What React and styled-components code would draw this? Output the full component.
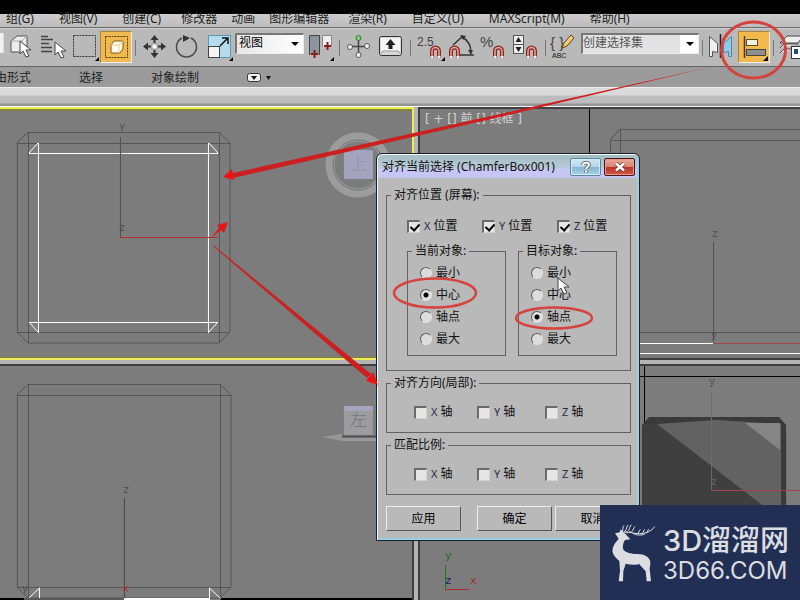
import React from 'react';
import styled, { createGlobalStyle } from 'styled-components';

const GlobalStyle = createGlobalStyle`
  * {
    box-sizing: border-box;
  }

  body {
    margin: 0;
    font-family: "Noto Sans", "Noto Sans CJK SC", sans-serif;
    font-size: 12px;
    line-height: 16px;
    color: #111;
  }
`;

const Screen = styled.div`
  position: relative;
  display: flex;
  flex-direction: column;
  height: 100vh;
  overflow: hidden;
  background: #b9b9b9;
`;

const TopBand = styled.div`
  flex: none;
  height: 14px;
  background: #000;
`;

const MenuBar = styled.nav`
  flex: none;
  display: flex;
  height: 13px;
  line-height: 10px;
  background: linear-gradient(#cbcbcb, #bdbdbd);
`;

const MenuItem = styled.a`
  flex: none;
  padding: ${p => (p.$hotkey ? '0 13px 0 12px' : '0 7px')};
  color: #222;
  text-decoration: none;
  white-space: nowrap;

  &:first-child {
    padding-left: 6px;
  }
`;

const Toolbar = styled.div`
  flex: none;
  display: flex;
  height: 40px;
  padding-top: 3px;
  overflow: hidden;
  border-top: 1px solid #6c6c6c;
  border-bottom: 1px solid #626262;
  background: #b9b9b9;
  box-shadow: inset 0 1px #cfcfcf;
`;

const IconButton = styled.button`
  flex: none;
  width: 32px;
  height: 32px;
  padding: 0;
  border: 1px solid ${p => (p.$active ? '#a58440' : 'transparent')};
  border-right-color: ${p => (p.$active ? '#eee' : 'transparent')};
  border-bottom-color: ${p => (p.$active ? '#eee' : 'transparent')};
  background: ${p => (p.$active ? '#f2b94e' : 'none')};

  svg {
    display: block;
    margin: -1px;
  }
`;

const Separator = styled.span`
  flex: none;
  width: 7px;
  height: 16px;
  margin-top: 9px;
  background: linear-gradient(#777, #777) 3px 0 / 1px 100% no-repeat;
`;

const FieldEnd = styled.span`
  flex: none;
  width: 4px;
  height: 20px;
  margin-top: 2px;
  background: #f1f1f1;
  border-right: 1px solid #ddd;
`;

const SelectBox = styled.span`
  flex: none;
  position: relative;
  width: ${p => p.$width}px;
  height: 21px;
  margin-top: 2px;

  &::after {
    content: '';
    position: absolute;
    top: 9px;
    right: 5px;
    border: 4px solid transparent;
    border-top-color: #000;
    border-bottom: 0;
    pointer-events: none;
  }
`;

const Select = styled.select`
  appearance: none;
  display: block;
  width: 100%;
  height: 100%;
  padding: 0 0 2px ${p => (p.$muted ? 0 : 2)}px;
  border: 1px solid #777;
  border-width: 2px 1px 1px 2px;
  border-right-color: #eee;
  border-bottom-color: #eee;
  border-radius: 0;
  background: ${p => (p.$muted ? 'linear-gradient(90deg, #e2e2e2 97px, #fff 97px)' : 'linear-gradient(90deg, #e8e8e8, #fff)')};
  color: ${p => (p.$muted ? '#555' : '#000')};
  font: inherit;
`;

const Ribbon = styled.div`
  flex: none;
  display: flex;
  align-items: center;
  gap: 48px;
  height: 20px;
  padding-top: 2px;
  background: #9b9b9b;
`;

const RibbonTab = styled.span`
  display: flex;
  justify-content: flex-end;
  white-space: nowrap;
  color: #222;

  &:first-child {
    width: 31px;
    overflow: hidden;
  }
`;

const RibbonToggle = styled.button`
  display: flex;
  padding: 0;
  border: 0;
  background: none;
`;

const RibbonEdge = styled.div`
  flex: none;
  height: 20px;
  border-top: 1px solid #eee;
  border-bottom: 1px solid #f4f4f4;
  background: linear-gradient(#dadada 7px, #bcbcbc 8px, #bcbcbc 15px, #959595 16px);
`;

const Viewports = styled.main`
  flex: 1;
  min-height: 0;
  display: grid;
  grid-template-columns: 52fr 48fr;
  grid-template-rows: 253fr 236fr;
  gap: 4px;
  background: #b4b4b4;
`;

const Viewport = styled.section`
  min-width: 0;
  min-height: 0;
  overflow: hidden;
  border: 2px solid ${p => (p.$active ? '#ecec5c' : '#3f3f3f')};
  border-left-width: ${p => (p.$flush ? 0 : 2)}px;
  border-right-width: ${p => (p.$flush ? 2 : 0)}px;
  border-bottom-width: ${p => (p.$last ? 0 : 2)}px;
  background: #7c7c7c;
  box-shadow: ${p => (p.$active ? 'inset 0 2px #85823c, inset 0 -1px #85823c' : 'none')};

  svg {
    display: block;
    width: 100%;
    height: 100%;
  }
`;

const Annotations = styled.svg`
  position: absolute;
  inset: 0;
  width: 100%;
  height: 100%;
  pointer-events: none;
`;

const Dialog = styled.div`
  position: absolute;
  left: 376px;
  top: 153px;
  width: 264px;
  border: 1px solid #17222b;
  border-radius: 6px 6px 0 0;
  background: #b9b9b9;
  box-shadow: inset 1px 1px #f2f7f9, inset -2px -2px #9bd0e6;
`;

const TitleBar = styled.header`
  display: flex;
  align-items: center;
  gap: 3px;
  height: 23px;
  margin: 1px 2px 0 1px;
  padding: 0 2px 0 4px;
  border-radius: 5px 5px 0 0;
  background: linear-gradient(#a3bfc0, #b9c9d8 55%, #c9c9fa 65%, #c4c4ef);
`;

const Title = styled.h1`
  flex: 1;
  margin: 0;
  font-size: 12px;
  font-weight: 400;
  color: #111;
  white-space: nowrap;
`;

const TitleButton = styled.button`
  display: flex;
  align-items: center;
  justify-content: center;
  width: 31px;
  height: 18px;
  padding: 0;
  border: 1px solid ${p => (p.$danger ? '#4a1418' : '#5c86a6')};
  border-radius: 2px;
  background: ${p => (p.$danger
    ? 'linear-gradient(#e8aa9c, #d98472 48%, #b93325 50%, #cf5945)'
    : 'linear-gradient(#cfe6f2, #b5d6ea 48%, #84b3cf 50%, #a9d3e6)')};
  box-shadow: inset 0 0 0 1px ${p => (p.$danger ? '#e59a8b' : '#d6ecf5')};
`;

const DialogBody = styled.form`
  display: flex;
  flex-direction: column;
  gap: 4px;
  padding: 9px 8px 9px 9px;
`;

const Group = styled.fieldset`
  min-width: 0;
  margin: 0;
  padding: 0;
  border: 1px solid #626262;
`;

const Legend = styled.legend`
  height: 16px;
  margin-left: 4px;
  padding: 0 3px;
`;

const GroupBody = styled.div`
  padding: ${p => p.$pad};
`;

const CheckRow = styled.div`
  display: grid;
  grid-template-columns: ${p => p.$columns};
`;

const Choice = styled.label`
  display: flex;
  align-items: center;
  gap: 4px;
  height: 14px;
  line-height: 18px;
  white-space: nowrap;
`;

const Axis = styled.span`
  margin-right: 3px;
  font-size: 11px;
  color: #2b2b4c;
`;

const Checkbox = styled.input`
  appearance: none;
  width: 13px;
  height: 13px;
  margin: 0;
  border: 2px solid #6a6a6a;
  border-right: 1px solid #d2d2d2;
  border-bottom: 1px solid #d2d2d2;
  background: #e6e6e6;

  &:checked::before {
    content: '';
    display: block;
    width: 4px;
    height: 7px;
    margin: 0 0 0 3px;
    border: solid #000;
    border-width: 0 2px 2px 0;
    transform: rotate(42deg);
  }
`;

const RadioList = styled.div`
  display: flex;
  flex-direction: column;
  gap: 8px;
`;

const Radio = styled.input`
  appearance: none;
  width: 12px;
  height: 12px;
  margin: 0;
  border: 1px solid;
  border-color: #5c5c5c #e2e2e2 #e2e2e2 #5c5c5c;
  border-radius: 50%;
  background: ${p => (p.defaultChecked ? 'radial-gradient(#000 2px, #e0e0e0 3px)' : '#dcdcdc')};
`;

const PairRow = styled.div`
  display: grid;
  grid-template-columns: 1fr 1fr;
  gap: 12px;
  margin-top: 10px;
`;

const ButtonRow = styled.div`
  display: grid;
  grid-template-columns: 75px 75px 75px;
  column-gap: 3px;
  justify-content: end;
  margin: 7px 1px 0 0;

  button:first-child {
    margin: 0 13px 0 -13px;
  }
`;

const PushButton = styled.button`
  height: 25px;
  padding: 0;
  border: 1px solid;
  border-color: #ececec #585858 #585858 #ececec;
  background: #b9b9b9;
  color: #000;
  font: inherit;
`;

const Watermark = styled.aside`
  position: absolute;
  right: 0;
  bottom: 0;
  display: flex;
  align-items: center;
  gap: 6px;
  width: 200px;
  height: 95px;
  padding-left: 10px;
  background: #212f54;
  color: #dcdde0;
`;

const BrandText = styled.div`
  font-family: "Inter", "Noto Sans CJK SC", sans-serif;
  white-space: nowrap;
`;

const BrandName = styled.div`
  font-size: 29px;
  font-weight: 500;
  line-height: 36px;
`;

const BrandSite = styled.div`
  font-size: 24px;
  line-height: 24px;
`;

const menus = [
  { label: '组(G)', hotkey: true },
  { label: '视图(V)', hotkey: true },
  { label: '创建(C)', hotkey: true },
  { label: '修改器' },
  { label: '动画' },
  { label: '图形编辑器' },
  { label: '渲染(R)', hotkey: true },
  { label: '自定义(U)', hotkey: true },
  { label: 'MAXScript(M)', hotkey: true },
  { label: '帮助(H)', hotkey: true },
];

const Cursor = ({ x, y }) => (
  <path
    transform={`translate(${x} ${y})`}
    d="M0 0v13l3-3 3 6 3-1-3-6h5z"
    fill="#fff"
    stroke="#444"
    strokeWidth="1"
  />
);

const Magnet = ({ x, y }) => (
  <g transform={`translate(${x} ${y})`} fill="none">
    <path d="M2 12V5a3.500 3.500 0 0 1 7 0v7" stroke="#8c2420" strokeWidth="4" />
    <path d="M2 11V5a3.500 3.500 0 0 1 7 0v6" stroke="#e8a79c" strokeWidth="1.500" />
    <path d="M0.500 11h3M7.500 11h3" stroke="#f5f5f5" strokeWidth="2" />
  </g>
);

const Corner = ({ x = 28, y = 29 }) => <path d={`M${x} ${y}v-4l-4 4z`} fill="#000" />;

const icons = {
  select: (
    <>
      <path d="M7 10l6-5h10v11l-5 5H7z" fill="#eee" stroke="#555" />
      <path d="M7 10h11v11M18 10l5-5" fill="none" stroke="#aaa" />
      <Cursor x={16} y={10} />
    </>
  ),
  list: (
    <>
      <path d="M5 5.500h7M5 8.500h12M5 12.500h8M5 16.500h11M5 20.500h11" stroke="#444" strokeWidth="1.500" />
      <Cursor x={19} y={11} />
    </>
  ),
  region: (
    <>
      <rect x="5.500" y="4.500" width="22" height="21" fill="none" stroke="#333" strokeDasharray="2 1" />
      <path d="M31 30v-4l-4 4z" fill="#000" />
    </>
  ),
  windowMode: (
    <>
      <rect x="5.500" y="5.500" width="22" height="21" fill="none" stroke="#4c3a10" strokeDasharray="2 1" />
      <path d="M11 14l3-4h9v8l-3 4h-9z" fill="#fffbe8" stroke="#7d5c18" />
      <path d="M11 14h8v8M19 14l4-4" fill="none" stroke="#e8cf95" />
    </>
  ),
  move: (
    <>
      <path d="M15.500 4l4 5h-3v3h-2V9h-3zM15.500 27l4-5h-3v-3h-2v3h-3zM4 15.500l5-4v3h3v2H9v3zM27 15.500l-5-4v3h-3v2h3v3z" fill="#333" />
      <rect x="13" y="13" width="5" height="5" fill="#fff" stroke="#999" />
    </>
  ),
  rotate: (
    <>
      <path d="M11 7a10 10 0 1 0 9 0" fill="none" stroke="#4a4a4a" strokeWidth="1.500" />
      <path d="M12 4l7 3-7 4z" fill="#333" />
    </>
  ),
  scale: (
    <>
      <rect x="5.500" y="4.500" width="22" height="22" fill="#b4dcec" stroke="#5a9ab5" />
      <rect x="5.500" y="15.500" width="11" height="11" fill="#f4f4f4" stroke="#444" />
      <path d="M17 15l7-7M19 7h6v6" fill="none" stroke="#111" strokeWidth="1.500" />
      <path d="M30 30v-4l-4 4z" fill="#000" />
    </>
  ),
  pivot: (
    <>
      <path d="M5.500 24V4.500h10V24" fill="#8d969e" stroke="#444" />
      <path d="M18.500 16V4.500h9v11" fill="#eee" stroke="#888" />
      <path d="M7 23h7M10.500 19v8M20 15h7M23.500 11v8" stroke="#8a1c1c" strokeWidth="2" />
      <Corner x={30} y={30} />
    </>
  ),
  manipulate: (
    <>
      <path d="M15.500 8v16M7 15.500h18" stroke="#444" strokeWidth="1.500" />
      <circle cx="15.500" cy="7" r="2.500" fill="#7fd07a" stroke="#2d7a2d" />
      <circle cx="7" cy="16" r="2.500" fill="#f4f4f4" stroke="#555" />
      <circle cx="24" cy="15" r="2.500" fill="#f4f4f4" stroke="#555" />
      <circle cx="15.500" cy="24" r="2.500" fill="#f4f4f4" stroke="#555" />
    </>
  ),
  keyboard: (
    <>
      <rect x="4.500" y="5.500" width="22" height="19" rx="2" fill="#d8d8d8" stroke="#333" />
      <rect x="6" y="7" width="19" height="13" fill="#f6f6f6" />
      <path d="M15.500 8l5 6h-3v4h-4v-4h-3z" fill="#222" />
      <path d="M5 24l3-4h15l3 4" fill="none" stroke="#999" />
    </>
  ),
  snap: (
    <>
      <text x="3" y="15" fontSize="12" fill="#444">2.5</text>
      <Magnet x={16} y={15} />
      <Corner x={31} y={30} />
    </>
  ),
  angle: (
    <>
      <path d="M7 14L17 5M14 24h14M16 6c6 3 9 9 9 16" fill="none" stroke="#333" strokeWidth="1.500" />
      <path d="M14 4l6 1-3 4zM22 19h5l-2 5z" fill="#333" />
      <Magnet x={3} y={15} />
    </>
  ),
  percent: (
    <>
      <text x="2" y="16" fontSize="15" fill="#444">%</text>
      <Magnet x={15} y={15} />
    </>
  ),
  spinner: (
    <>
      <rect x="3.500" y="4.500" width="10" height="18" fill="#eee" stroke="#555" />
      <path d="M3 13.500h11" stroke="#555" />
      <path d="M8.500 6l3 5h-6zM8.500 21l3-5h-6z" fill="#222" />
      <Magnet x={16} y={15} />
    </>
  ),
  edit: (
    <>
      <text x="1" y="17" fontSize="15" fill="#444">{'{ }'}</text>
      <path d="M13 17l2-5 7-8 3 3-7 8z" fill="#f1cc76" stroke="#5d4412" />
      <text x="3" y="27" fontSize="7" fill="#111">ABC</text>
    </>
  ),
  mirror: (
    <>
      <path d="M3.500 25.500V5.500l8 7v9l-5-1v5z" fill="#f0f0f0" stroke="#555" />
      <path d="M25.500 25.500V5.500l-8 7v9l5-1v5z" fill="#8ecbe6" stroke="#4e8aa8" />
      <path d="M14.500 3v24" stroke="#222" strokeWidth="1.500" />
    </>
  ),
  align: (
    <>
      <path d="M6.500 5v22" stroke="#4a3a12" strokeWidth="1.500" />
      <rect x="8.500" y="8.500" width="11" height="6" fill="#f4efdc" stroke="#5d4c20" />
      <rect x="8.500" y="18.500" width="19" height="6" fill="#8e8e8e" stroke="#4c4636" />
      <path d="M30 30v-5l-5 5z" fill="#000" />
    </>
  ),
  layers: (
    <>
      <path d="M3 12l7-7h16l-5 7zM3 17l4-4h14M3 22l4-4h10" fill="#eee" stroke="#444" />
      <rect x="14.500" y="15.500" width="14" height="12" fill="#fff" stroke="#333" />
      <path d="M17 18h4v5h-4z" fill="#234a7a" />
    </>
  ),
};

const Tool = ({ name, label, active }) => (
  <IconButton type="button" aria-label={label} $active={active}>
    <svg width="32" height="32" viewBox="0 0 32 32">{icons[name]}</svg>
  </IconButton>
);

// a chamfered box seen flat: inner lines, outer lines and the four cut corners
const BoxWire = ({ x, y, w, h }) => (
  <path
    transform={`translate(${x} ${y})`}
    d={`M11 0.500H${w - 11}M0 11.500H${w}M0 ${h - 10.5}H${w}M11 ${h}H${w - 11}
      M0.500 11V${h - 11}M11.500 0V${h}M${w - 10.5} 0V${h}M${w} 11V${h - 11}
      M0 11L11 0M${w} 11L${w - 11} 0M0 ${h - 11}L11 ${h}M${w} ${h - 11}L${w - 11} ${h}`}
    fill="none"
    stroke="#565656"
  />
);

const AxisName = ({ x, y, color = '#4c4c4c', size = 10, children }) => (
  <text x={x} y={y} fontSize={size} fill={color} fontFamily="Liberation Mono, monospace">{children}</text>
);

const TopView = () => (
  <svg viewBox="0 109 412 249" preserveAspectRatio="xMidYMid slice">
    <BoxWire x={17} y={132} w={213} h={211} />
    <path
      d="M29 153.500H218M29 322.500H218M38.500 143V333M208.500 143V333M29 153l9-10M218 153l-9-10M29 322l9 10M218 322l-9 10"
      fill="none"
      stroke="#fff"
    />
    <path d="M120.500 137V237" stroke="#505050" />
    <path d="M120 237.500H218" stroke="#b52a2a" />
    <AxisName x={119} y={131}>Y</AxisName>
    <AxisName x={119} y={231}>z</AxisName>
    <circle cx="358" cy="165" r="28" fill="none" stroke="#9c9c9c" strokeWidth="9" />
    <circle cx="358" cy="165" r="25" fill="none" stroke="#6f7676" />
    <rect x="344" y="150" width="29" height="29" fill="#a3a3c0" />
    <text x="350" y="170" fontSize="17" fontWeight="300" fill="#92929c">上</text>
  </svg>
);

const FrontView = () => (
  <svg viewBox="420 109 380 249" preserveAspectRatio="xMidYMid slice">
    <text x="425" y="123" fontSize="12" fontFamily="DejaVu Sans, Noto Sans CJK SC, sans-serif" fill="#d4d4d4">[ + [] 前 [] 线框 ]</text>
    <path d="M589.500 109V160" stroke="#000" />
    <path d="M620 129.500H800M610 140.500H800M610.500 140V332M620.500 129V343M610 140l10-11M610 332.500H800" fill="none" stroke="#565656" />
    <path d="M713.500 242V342" stroke="#505050" />
    <path d="M610 343.500H713M610 353.500H800" stroke="#fff" />
    <path d="M713 343.500H800" stroke="#a84444" />
    <AxisName x={712} y={237}>z</AxisName>
    <AxisName x={711} y={338}>y</AxisName>
  </svg>
);

const LeftView = () => (
  <svg viewBox="0 366 412 234" preserveAspectRatio="xMidYMid slice">
    <BoxWire x={17} y={384} w={214} h={214} />
    <path d="M124.500 498V598" stroke="#484848" />
    <AxisName x={123} y={493}>z</AxisName>
    <AxisName x={123} y={592} color="#b83030">x</AxisName>
    <AxisName x={22} y={592}>y</AxisName>
    <path d="M0 599H24M221 599H412" stroke="#000" strokeWidth="2" />
    <path d="M24 599H124" stroke="#5a5a5a" strokeWidth="2" />
    <path d="M124 599H210" stroke="#fff" strokeWidth="2" />
    <path d="M29 598l10.500-10v10M220 598l-10.500-10v10" fill="none" stroke="#fff" />
    <path d="M322 437l20-3v4H412v3H342z" fill="#989898" />
    <path d="M342 436.500H412" stroke="#555" strokeWidth="2" />
    <rect x="344" y="406" width="29" height="29" fill="#9c9c9e" />
    <rect x="344" y="406" width="29" height="5" fill="#a4a4bd" />
    <text x="350" y="426" fontSize="17" fontWeight="300" fill="#747476">左</text>
  </svg>
);

const PerspectiveView = () => (
  <svg viewBox="420 366 380 234" preserveAspectRatio="xMidYMid slice">
    <path d="M600 376.500H800M644.500 366V425" stroke="#000" />
    <path d="M642 600V425l7-8H779l7 8V600z" fill="#3a3a3a" />
    <path d="M657 424l60-4 64 4v176H657z" fill="#626262" />
    <path d="M644 424h13l105 81v95H644z" fill="#3f3f3f" />
    <path d="M745 423h35v27z" fill="#858585" />
    <path d="M711.500 392V490" stroke="#6c6c6c" />
    <path d="M711 490.500H800" stroke="#9d4550" />
    <AxisName x={709} y={385}>y</AxisName>
    <AxisName x={711} y={485} color="#666">z</AxisName>
    <path d="M445.500 565V589" stroke="#1d7a1d" />
    <path d="M445 589.500H469" stroke="#b02828" />
    <AxisName x={445} y={559} color="#1d6b1d" size={11}>y</AxisName>
    <AxisName x={445} y={584} color="#10206b" size={11}>z</AxisName>
    <AxisName x={470} y={584} color="#a02c2c" size={11}>x</AxisName>
  </svg>
);

const Check = ({ axis, text, checked }) => (
  <Choice>
    <Checkbox type="checkbox" defaultChecked={checked} />
    <span><Axis>{axis}</Axis>{text}</span>
  </Choice>
);

const Anchors = ({ name, title, value }) => (
  <Group>
    <Legend>{title}</Legend>
    <GroupBody $pad="7px 0 9px 12px">
      <RadioList>
        {['最小', '中心', '轴点', '最大'].map(option => (
          <Choice key={option}>
            <Radio type="radio" name={name} defaultChecked={option === value} />
            {option}
          </Choice>
        ))}
      </RadioList>
    </GroupBody>
  </Group>
);

const AxisGroup = ({ title }) => (
  <Group>
    <Legend>{title}</Legend>
    <GroupBody $pad="14px 0 13px 27px">
      <CheckRow $columns="63px 68px auto">
        {['X', 'Y', 'Z'].map(axis => <Check key={axis} axis={axis} text="轴" />)}
      </CheckRow>
    </GroupBody>
  </Group>
);

const AlignDialog = () => (
  <Dialog role="dialog" aria-labelledby="align-title">
    <TitleBar>
      <Title id="align-title">对齐当前选择 (ChamferBox001)</Title>
      <TitleButton type="button" aria-label="帮助">
        <svg width="10" height="12" viewBox="0 0 10 12" fill="none">
          <path d="M2 4c0-3 6-3 6 0 0 2-3 2-3 4M5 9.500v2" stroke="#555" strokeWidth="3.500" />
          <path d="M2 4c0-3 6-3 6 0 0 2-3 2-3 4M5 9.500v2" stroke="#fff" strokeWidth="2" />
        </svg>
      </TitleButton>
      <TitleButton type="button" aria-label="关闭" $danger>
        <svg width="12" height="10" viewBox="0 0 12 10">
          <path d="M2 1.500l8 7M10 1.500l-8 7" stroke="#66302c" strokeWidth="4" />
          <path d="M2 1.500l8 7M10 1.500l-8 7" stroke="#fff" strokeWidth="2.500" />
        </svg>
      </TitleButton>
    </TitleBar>
    <DialogBody>
      <Group>
        <Legend>对齐位置 (屏幕):</Legend>
        <GroupBody $pad="16px 13px 14px 20px">
          <CheckRow $columns="75px 75px auto">
            {['X', 'Y', 'Z'].map(axis => <Check key={axis} axis={axis} text="位置" checked />)}
          </CheckRow>
          <PairRow>
            <Anchors name="current" title="当前对象:" value="中心" />
            <Anchors name="target" title="目标对象:" value="轴点" />
          </PairRow>
        </GroupBody>
      </Group>
      <AxisGroup title="对齐方向(局部):" />
      <AxisGroup title="匹配比例:" />
      <ButtonRow>
        <PushButton type="button">应用</PushButton>
        <PushButton type="button">确定</PushButton>
        <PushButton type="button">取消</PushButton>
      </ButtonRow>
    </DialogBody>
  </Dialog>
);

const Deer = () => (
  <svg width="47" height="62" viewBox="60 455 141 186">
    <path
      d="M75 489l14-3 3-9 8 8 9 9 12 13-16 2c-6 8-8 20-5 29 8 9 22 12 42 13 22 0 37 9 39 24 1 7-2 14-2 21l4 37h-13l-3-30-15-17-4-5c-14 4-28 3-41-1l-7 23-1 30H86l4-32-2-29c-14-12-23-24-20-36 2-14 12-22 18-31z"
      fill="#dcdde0"
    />
    <path
      d="M98 484c1-9-1-13 4-19M101 485c10-3 6-12 13-21M103 486c18-2 12-11 21-23M106 487c26 2 20-8 29-19M117 484c26 11 62 8 77-15M143 491l8-14M156 492l8-15M169 489l7-13M127 488c12 8 26 7 37 4"
      fill="none"
      stroke="#dcdde0"
      strokeWidth="3"
    />
  </svg>
);

const App = () => (
  <Screen>
    <GlobalStyle />
    <TopBand />
    <MenuBar>
      {menus.map(({ label, hotkey }) => (
        <MenuItem key={label} href="#" $hotkey={hotkey}>{label}</MenuItem>
      ))}
    </MenuBar>
    <Toolbar>
      <FieldEnd />
      <Tool name="select" label="选择对象" />
      <Tool name="list" label="按名称选择" />
      <Tool name="region" label="选择区域" />
      <Tool name="windowMode" label="窗口/交叉" active />
      <Separator />
      <Tool name="move" label="移动" />
      <Tool name="rotate" label="旋转" />
      <Tool name="scale" label="缩放" />
      <SelectBox $width={69}>
        <Select aria-label="参考坐标系"><option>视图</option></Select>
      </SelectBox>
      <Tool name="pivot" label="轴点中心" />
      <Separator />
      <Tool name="manipulate" label="操纵" />
      <Tool name="keyboard" label="键盘快捷键" />
      <Separator />
      <Tool name="snap" label="捕捉开关" />
      <Tool name="angle" label="角度捕捉" />
      <Tool name="percent" label="百分比捕捉" />
      <Tool name="spinner" label="微调器捕捉" />
      <Separator />
      <Tool name="edit" label="编辑命名选择集" />
      <SelectBox $width={118}>
        <Select aria-label="命名选择集" $muted><option>创建选择集</option></Select>
      </SelectBox>
      <Separator />
      <Tool name="mirror" label="镜像" />
      <Tool name="align" label="对齐" active />
      <Separator />
      <Tool name="layers" label="层管理器" />
    </Toolbar>
    <Ribbon>
      <RibbonTab>自由形式</RibbonTab>
      <RibbonTab>选择</RibbonTab>
      <RibbonTab>对象绘制</RibbonTab>
      <RibbonToggle type="button" aria-label="展开功能区">
        <svg width="26" height="10" viewBox="0 0 26 10">
          <rect x="0.500" y="0.500" width="13" height="8" rx="2" fill="#eee" stroke="#333" />
          <path d="M4 3h6l-3 4zM19 3h5l-2.500 4z" fill="#111" />
        </svg>
      </RibbonToggle>
    </Ribbon>
    <RibbonEdge />
    <Viewports>
      <Viewport $active $flush><TopView /></Viewport>
      <Viewport><FrontView /></Viewport>
      <Viewport $flush $last><LeftView /></Viewport>
      <Viewport $last><PerspectiveView /></Viewport>
    </Viewports>
    <AlignDialog />
    <Annotations viewBox="0 0 800 600">
      <g fill="none" stroke="#d6423e" strokeWidth="3">
        <ellipse cx="753.500" cy="50" rx="32" ry="28" />
        <ellipse cx="435" cy="293" rx="41" ry="14.500" strokeWidth="2.500" />
        <ellipse cx="554" cy="318" rx="38" ry="10.500" strokeWidth="2.500" />
      </g>
      <path d="M710 67L500 114 233 173v5L500 117z" fill="#cc1f1f" />
      <path d="M223 177l9-8 2 11z" fill="#f01212" />
      <path d="M213 245l1 2 153 131 4-4z" fill="#cc1f1f" />
      <path d="M378 385l-12-4 7-9z" fill="#f01212" />
      <path d="M211 238l8-10-2-3 11-3-4 11-3-3z" fill="#e01818" />
      <Cursor x={558} y={278} />
    </Annotations>
    <Watermark>
      <Deer />
      <BrandText>
        <BrandName>3D溜溜网</BrandName>
        <BrandSite>3D66.COM</BrandSite>
      </BrandText>
    </Watermark>
  </Screen>
);

export default App;
